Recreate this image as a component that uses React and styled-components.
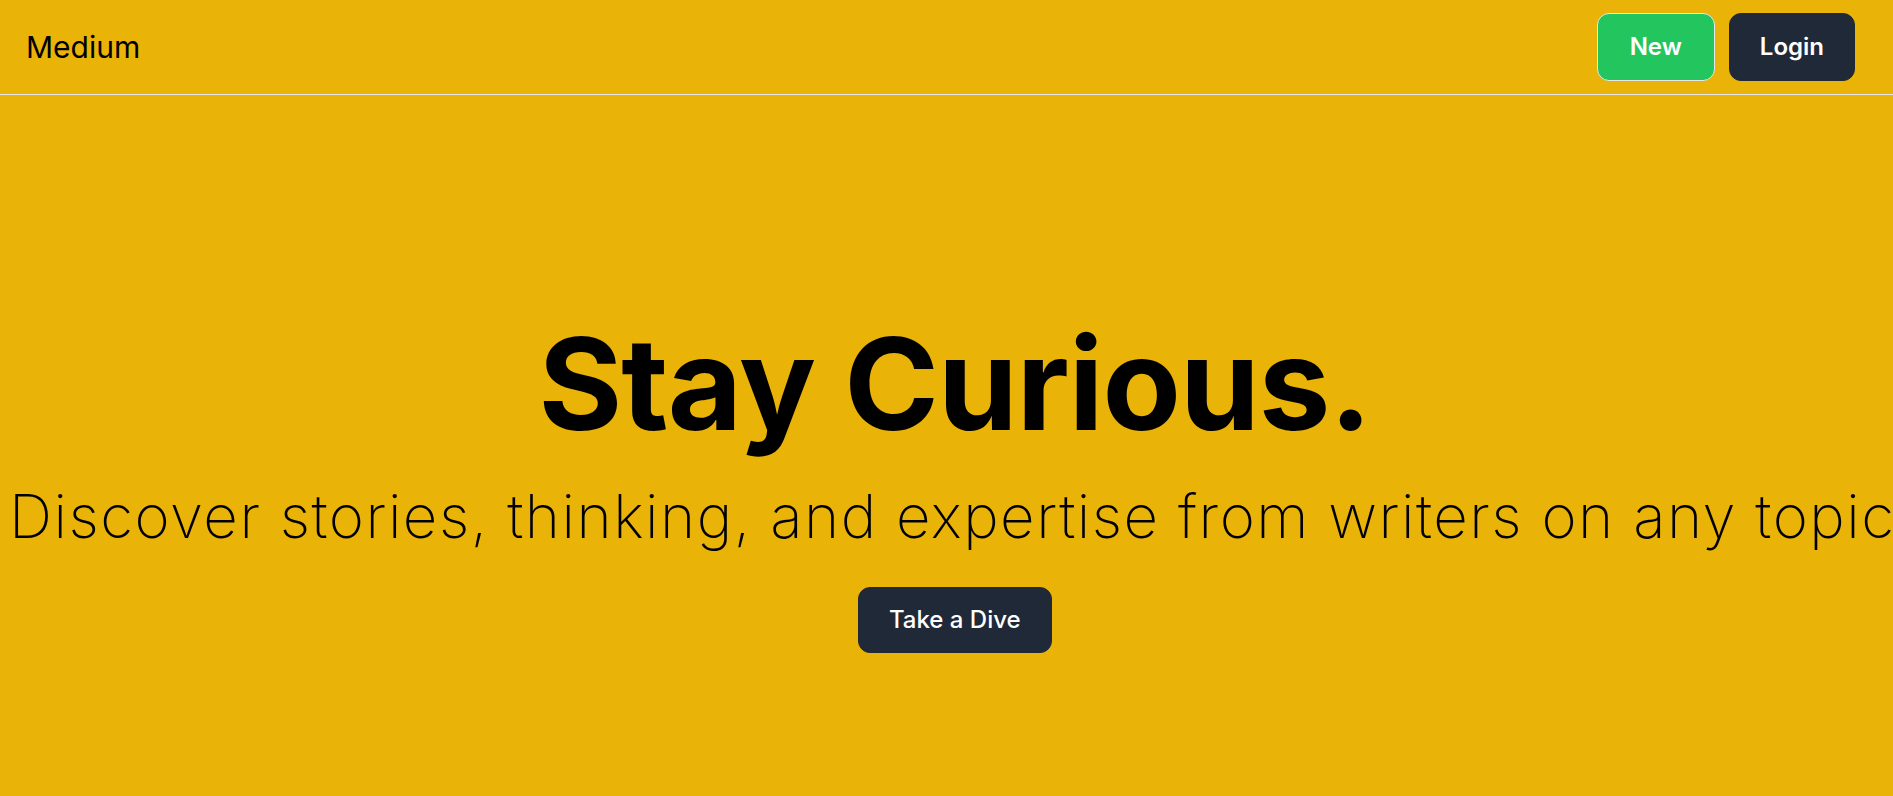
import React from "react";
import styled, { createGlobalStyle } from "styled-components";

const GlobalStyle = createGlobalStyle`
  html, body {
    margin: 0;
    padding: 0;
    background: #eab308;
    font-family: Inter, "Noto Sans", "Liberation Sans", sans-serif;
    overflow-x: hidden;
  }
  * { box-sizing: border-box; }
`;

const Page = styled.div`
  min-height: 796px;
  background: #eab308;
  overflow: hidden;
`;

const Header = styled.header`
  height: 95px;
  display: flex;
  align-items: center;
  justify-content: space-between;
  padding: 0 38px 0 26px;
  border-bottom: 1px solid #e5e7eb;
`;

const Brand = styled.div`
  font-size: 30px;
  font-weight: 400;
  color: #000;
  line-height: 1;
`;

const Actions = styled.div`
  display: flex;
  gap: 14px;
  align-items: center;
`;

const Button = styled.button`
  height: ${(p) => p.$h || 68}px;
  padding: 0 ${(p) => p.$px || 32}px;
  border-radius: 12px;
  border: 1px solid ${(p) => p.$border || p.$bg};
  background: ${(p) => p.$bg};
  color: #fff;
  font-family: Inter, "Noto Sans", sans-serif;
  font-size: 24px;
  font-weight: ${(p) => p.$weight || 600};
  line-height: 1;
  cursor: pointer;
`;

const Hero = styled.main`
  display: flex;
  flex-direction: column;
  align-items: center;
  width: max-content;
  min-width: 100%;
  padding-top: 225px;
`;

const Title = styled.h1`
  margin: 0;
  font-size: 128px;
  font-weight: 700;
  line-height: 1;
  letter-spacing: -1px;
  color: #000;
`;

const Subtitle = styled.p`
  margin: 38px 0 41px;
  padding: 0 14px 0 9px;
  white-space: nowrap;
  font-size: 60px;
  font-weight: 200;
  line-height: 1;
  letter-spacing: 1.5px;
  color: #000;
`;

export default function App() {
  return (
    <Page>
      <GlobalStyle />
      <Header>
        <Brand>Medium</Brand>
        <Actions>
          <Button $bg="#22c55e" $border="#e5e7eb">New</Button>
          <Button $bg="#1f2937" $px={30}>Login</Button>
        </Actions>
      </Header>
      <Hero>
        <Title>Stay Curious.</Title>
        <Subtitle>Discover stories, thinking, and expertise from writers on any topic</Subtitle>
        <Button $bg="#1f2937" $h={66} $weight={500} $px={30}>Take a Dive</Button>
      </Hero>
    </Page>
  );
}
